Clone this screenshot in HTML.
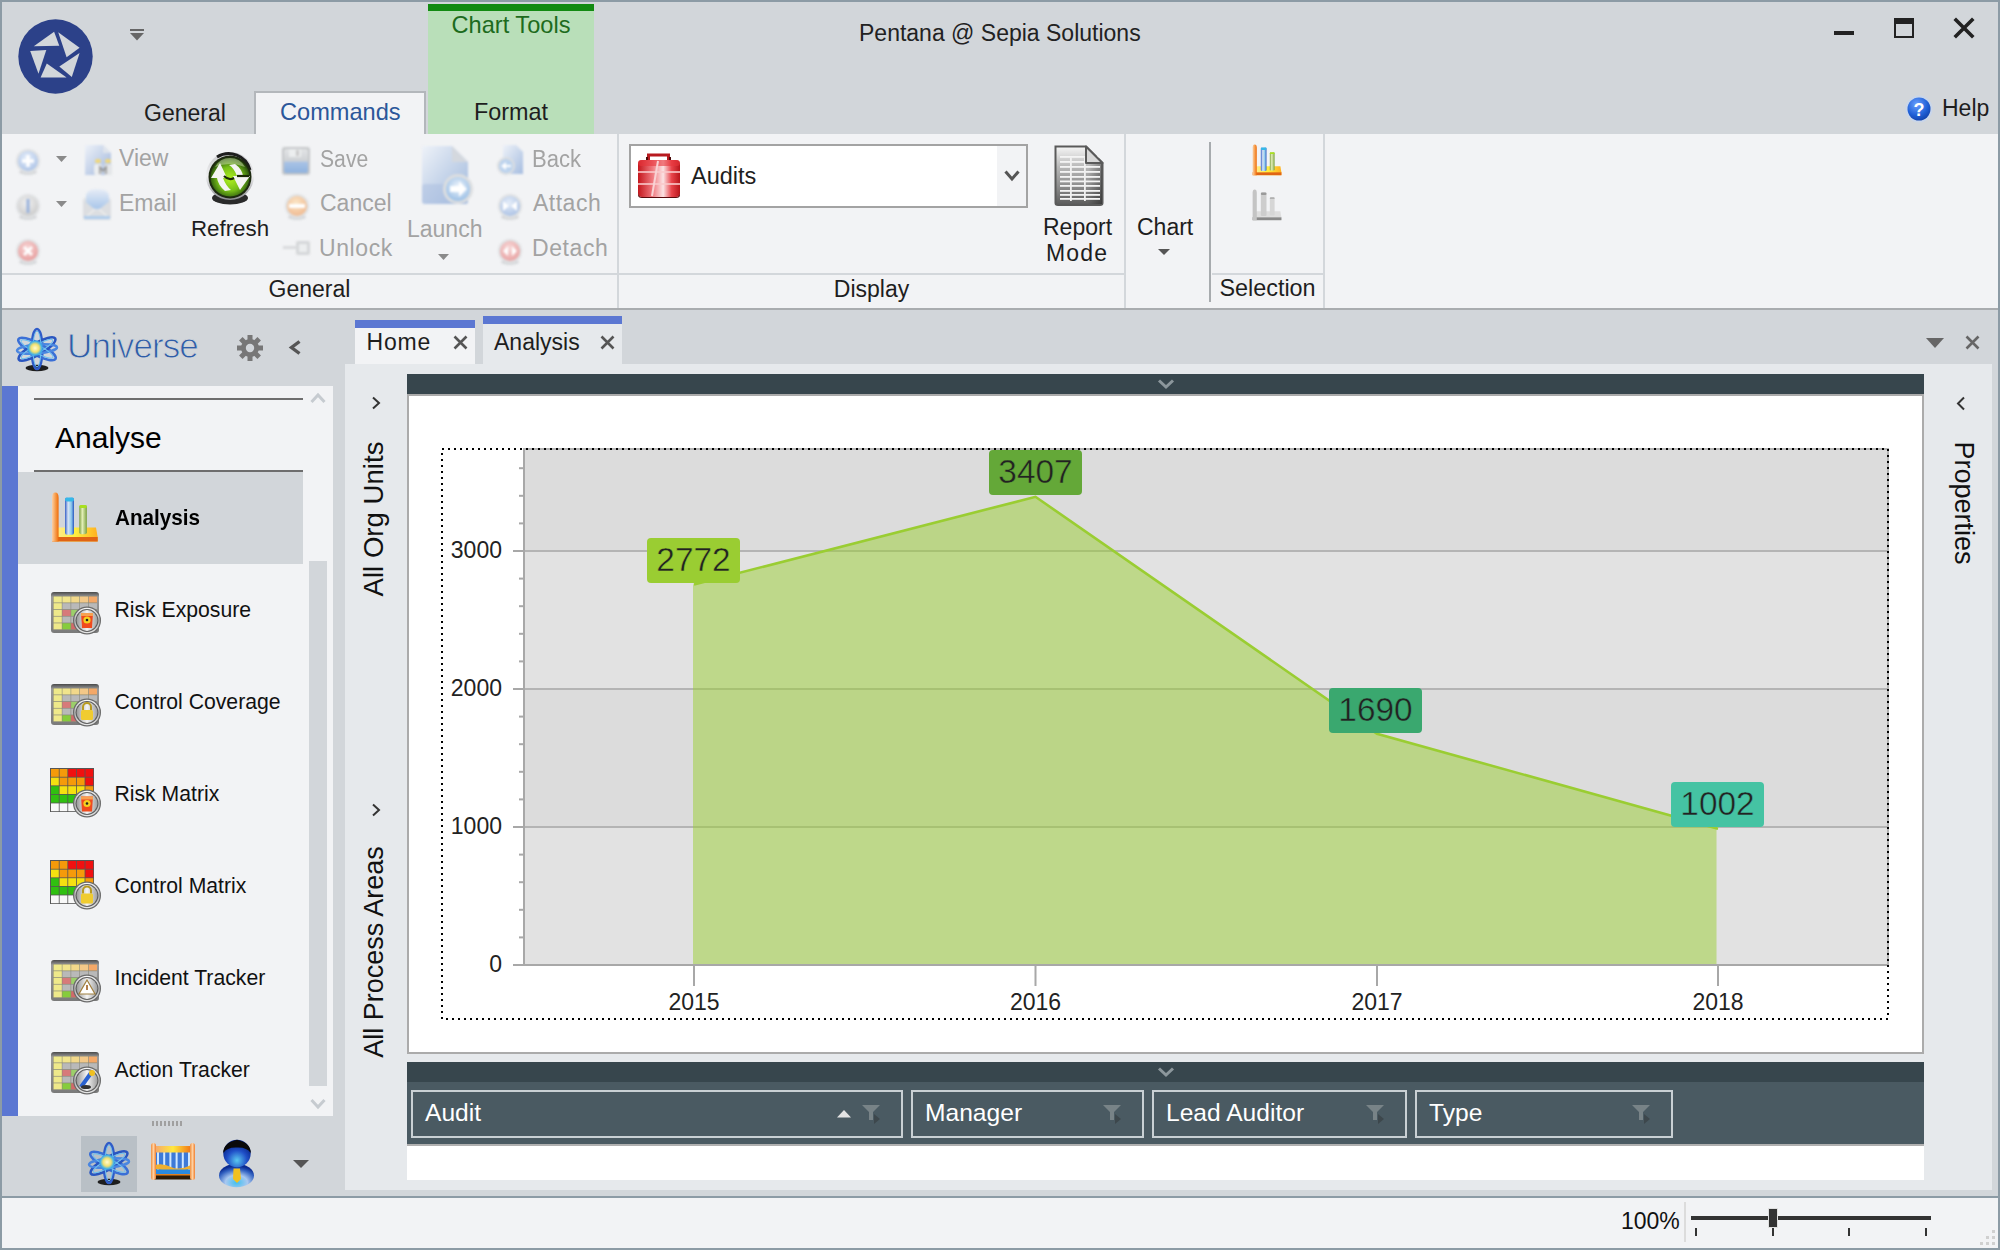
<!DOCTYPE html>
<html><head><meta charset="utf-8">
<style>
*{box-sizing:border-box;margin:0;padding:0}
html,body{width:2000px;height:1250px;overflow:hidden;background:#d2d6da;font-family:"Liberation Sans",sans-serif;color:#1e1e1e}
.a{position:absolute}
.t{position:absolute;white-space:nowrap;line-height:1}
svg{overflow:visible}
</style></head><body>
<div class="a" style="left:0px;top:0px;width:2000px;height:1250px;background:#d2d6da;"></div>
<svg class="a" style="left:18px;top:19px;" width="75" height="75" viewBox="0 0 75 75"><circle cx="37.5" cy="37.5" r="37.2" fill="#2c4189"/>
<g fill="#d2d6da">
<polygon points="15.8,27.3 36.1,12.7 41.3,26.8"/>
<polygon points="40.2,13.2 61.6,28.8 48.6,38.2"/>
<polygon points="61.6,34 53.8,58 41.3,47.6"/>
<polygon points="48.6,58.5 22.6,58.5 28.8,44.4"/>
<polygon points="20.5,54.8 12.2,32 28.3,30.9"/>
</g></svg>
<svg class="a" style="left:129px;top:28px;" width="16" height="14" viewBox="0 0 16 14"><rect x="1" y="1" width="14" height="2" fill="#666"/><path d="M1 5 H15 L8 12.5 Z" fill="#666"/></svg>
<div class="a" style="left:428px;top:4px;width:166px;height:130px;background:#b9dfb9;"></div>
<div class="a" style="left:428px;top:4px;width:166px;height:7px;background:#128a12;"></div>
<div class="t" style="left:428px;top:14.02px;font-size:23.6px;color:#1d6b1d;text-align:center;width:166px;">Chart Tools</div>
<div class="t" style="left:144px;top:101.53px;font-size:23px;color:#1e1e1e;">General</div>
<div class="a" style="left:254px;top:91px;width:172px;height:44px;background:#f2f3f5;border:2px solid #b3b7bb;border-bottom:none"></div>
<div class="t" style="left:280px;top:101.02px;font-size:23.6px;color:#2b579a;">Commands</div>
<div class="t" style="left:428px;top:101.19px;font-size:23.4px;color:#1e1e1e;text-align:center;width:166px;">Format</div>
<div class="t" style="left:859px;top:22.33px;font-size:23px;color:#222;">Pentana @ Sepia Solutions</div>
<div class="a" style="left:1834px;top:31px;width:20px;height:4px;background:#222;"></div>
<div class="a" style="left:1894px;top:18px;width:20px;height:20px;background:transparent;border:2px solid #222;border-top:6px solid #222"></div>
<svg class="a" style="left:1954px;top:18px;" width="20" height="20" viewBox="0 0 20 20"><path d="M2 2 L18 18 M18 2 L2 18" stroke="#222" stroke-width="3.6" stroke-linecap="square"/></svg>
<svg class="a" style="left:1905px;top:95px;" width="28" height="28" viewBox="0 0 28 28"><defs><radialGradient id="hg" cx="0.4" cy="0.3" r="0.8"><stop offset="0" stop-color="#6aa0ff"/><stop offset="0.6" stop-color="#1f5fd6"/><stop offset="1" stop-color="#0d3aa0"/></radialGradient></defs>
<circle cx="14" cy="14" r="13.5" fill="#c9d6ea"/><circle cx="14" cy="14" r="11.5" fill="url(#hg)"/>
<text x="14" y="21" font-family="Liberation Sans" font-weight="700" font-size="18" fill="#fff" text-anchor="middle">?</text></svg>
<div class="t" style="left:1942px;top:96.53px;font-size:23px;color:#1e1e1e;">Help</div>
<div class="a" style="left:2px;top:134px;width:1996px;height:174px;background:#f2f3f5;"></div>
<div class="a" style="left:2px;top:308px;width:1996px;height:2px;background:#a9acaf;"></div>
<div class="a" style="left:2px;top:273px;width:615px;height:2px;background:#d3d7db;"></div>
<div class="a" style="left:619px;top:273px;width:506px;height:2px;background:#d3d7db;"></div>
<div class="a" style="left:1212px;top:273px;width:111px;height:2px;background:#d3d7db;"></div>
<div class="a" style="left:617px;top:134px;width:2px;height:174px;background:#d3d7db;"></div>
<div class="a" style="left:1124px;top:134px;width:2px;height:174px;background:#d3d7db;"></div>
<div class="a" style="left:1323px;top:134px;width:2px;height:174px;background:#d3d7db;"></div>
<div class="a" style="left:1209px;top:142px;width:2px;height:160px;background:#a7abae;"></div>
<div class="t" style="left:2px;top:277.53px;font-size:23px;color:#1e1e1e;text-align:center;width:615px;">General</div>
<div class="t" style="left:619px;top:277.53px;font-size:23px;color:#1e1e1e;text-align:center;width:505px;">Display</div>
<div class="t" style="left:1212px;top:277.19px;font-size:23.4px;color:#1e1e1e;text-align:center;width:111px;">Selection</div>
<svg class="a" style="left:15px;top:146px;filter:blur(0.9px)" width="26" height="30" viewBox="0 0 26 30"><defs><radialGradient id="fc15146" cx="0.45" cy="0.35" r="0.7"><stop offset="0" stop-color="#e8f0fb"/><stop offset="1" stop-color="#a9c1e6"/></radialGradient></defs>
<ellipse cx="13" cy="26" rx="9" ry="3" fill="#d6d8da"/>
<circle cx="13" cy="15" r="12" fill="#dfe1e3"/><circle cx="13" cy="15" r="10" fill="url(#fc15146)"/><path d="M13 9 V21 M7 15 H19" stroke="#fff" stroke-width="3.5"/></svg>
<svg class="a" style="left:56px;top:156px;" width="11" height="6" viewBox="0 0 11 6"><path d="M0 0 H11 L5.5 6 Z" fill="#8a8a8a"/></svg>
<svg class="a" style="left:15px;top:191px;filter:blur(0.9px)" width="26" height="30" viewBox="0 0 26 30"><defs><radialGradient id="fc15191" cx="0.45" cy="0.35" r="0.7"><stop offset="0" stop-color="#f2f2f2"/><stop offset="1" stop-color="#c9c9c9"/></radialGradient></defs>
<ellipse cx="13" cy="26" rx="9" ry="3" fill="#d6d8da"/>
<circle cx="13" cy="15" r="12" fill="#dfe1e3"/><circle cx="13" cy="15" r="10" fill="url(#fc15191)"/><path d="M13 8 V22" stroke="#9ab3dc" stroke-width="3"/></svg>
<svg class="a" style="left:56px;top:201px;" width="11" height="6" viewBox="0 0 11 6"><path d="M0 0 H11 L5.5 6 Z" fill="#8a8a8a"/></svg>
<svg class="a" style="left:15px;top:236px;filter:blur(0.9px)" width="26" height="30" viewBox="0 0 26 30"><defs><radialGradient id="fc15236" cx="0.45" cy="0.35" r="0.7"><stop offset="0" stop-color="#f7d7d7"/><stop offset="1" stop-color="#e79a9a"/></radialGradient></defs>
<ellipse cx="13" cy="26" rx="9" ry="3" fill="#d6d8da"/>
<circle cx="13" cy="15" r="12" fill="#dfe1e3"/><circle cx="13" cy="15" r="10" fill="url(#fc15236)"/><path d="M9 11 L17 19 M17 11 L9 19" stroke="#fff" stroke-width="3"/></svg>
<svg class="a" style="left:84px;top:144px;filter:blur(0.9px)" width="30" height="32" viewBox="0 0 30 32"><defs><linearGradient id="vg" x1="0" y1="0" x2="1" y2="1"><stop offset="0" stop-color="#eef2f8"/><stop offset="1" stop-color="#9fb6dc"/></linearGradient></defs>
<path d="M1 1 H19 L27 9 V31 H1 Z" fill="url(#vg)"/><path d="M19 1 V9 H27" fill="#dfe4ec"/>
<rect x="10" y="20" width="8" height="11" rx="2" fill="#eceeef"/><rect x="20" y="20" width="8" height="11" rx="2" fill="#e4e6e8"/><path d="M16 30 V23 L19 27 L22 23 V30" stroke="#8a8a8a" stroke-width="1.4" fill="none"/>
<ellipse cx="14" cy="17" rx="3" ry="2" fill="#f2d878"/><ellipse cx="24" cy="17" rx="3" ry="2" fill="#f2d878"/></svg>
<div class="t" style="left:119px;top:147.23px;font-size:23px;color:#a3a3a3;">View</div>
<svg class="a" style="left:82px;top:189px;filter:blur(0.9px)" width="31" height="32" viewBox="0 0 31 32"><defs><linearGradient id="eg" x1="0" y1="0" x2="0" y2="1"><stop offset="0" stop-color="#e6ecf6"/><stop offset="1" stop-color="#a8c6ea"/></linearGradient></defs>
<path d="M1 10 L15 2 L29 10 V31 H1 Z" fill="#e2e4e6"/>
<path d="M4 20 V8 Q4 0 15 0 Q27 0 27 8 V20 Z" fill="url(#eg)"/>
<path d="M1 11 L15 22 L29 11 V31 H1 Z" fill="#dcdee1"/><path d="M1 31 L13 20 M29 31 L17 20" stroke="#eeeeee" stroke-width="1.5"/>
<rect x="2" y="27" width="26" height="3" fill="#b0cdec"/></svg>
<div class="t" style="left:119px;top:192.23px;font-size:23px;color:#a3a3a3;">Email</div>
<svg class="a" style="left:203px;top:145px;filter:blur(0.7px)" width="52" height="62" viewBox="0 0 52 62"><defs><radialGradient id="rg" cx="0.5" cy="0.55" r="0.55"><stop offset="0" stop-color="#b0f020"/><stop offset="0.55" stop-color="#78c018"/><stop offset="0.85" stop-color="#3d7010"/><stop offset="1" stop-color="#1e3a08"/></radialGradient>
<linearGradient id="rr" x1="0" y1="0" x2="0" y2="1"><stop offset="0" stop-color="#c8c8cc"/><stop offset="0.5" stop-color="#f0f0f2"/><stop offset="1" stop-color="#8a8a90"/></linearGradient></defs>
<g>
<ellipse cx="27" cy="53" rx="18" ry="6.5" fill="#2a2a2a"/>
<circle cx="27" cy="31" r="24" fill="url(#rr)"/>
<path d="M14 12 A22 22 0 0 1 47 25" stroke="#1e1e1e" stroke-width="3" fill="none"/>
<circle cx="27" cy="32" r="21.5" fill="#1e2a10"/>
<circle cx="27" cy="32" r="19.5" fill="url(#rg)"/>
<path d="M12 22 A17 17 0 0 1 42 22 Q27 16 12 22 Z" fill="#e0f0c0" opacity="0.45"/>
<path d="M8 33 L17 18 L24 33 L20 33 Q23 41 28 45 L22 46 Q15 40 14 33 Z" fill="#f4f4f2"/>
<path d="M47 31 L37 45 L30 31 L34 31 Q31 23 26 20 L32 19 Q39 24 40 31 Z" fill="#f4f4f2"/>
<path d="M21 31 Q26 36 31 33" stroke="#1a2a05" stroke-width="2.2" fill="none"/>
<path d="M34 31 L46 31" stroke="#1a2a05" stroke-width="2.2"/>
</g></svg>
<div class="t" style="left:191px;top:217.82px;font-size:22.3px;color:#1e1e1e;">Refresh</div>
<svg class="a" style="left:281px;top:146px;filter:blur(0.9px)" width="30" height="30" viewBox="0 0 30 30"><defs><linearGradient id="sg" x1="0" y1="0" x2="0" y2="1"><stop offset="0" stop-color="#e2e4e6"/><stop offset="0.5" stop-color="#cfd2d5"/><stop offset="0.55" stop-color="#a9c3e6"/><stop offset="1" stop-color="#8fb2de"/></linearGradient></defs>
<rect x="1" y="1" width="28" height="28" rx="3" fill="#c5c7c9"/><rect x="3" y="3" width="24" height="24" rx="2" fill="url(#sg)"/><rect x="8" y="3" width="12" height="8" fill="#eceeef"/><rect x="15" y="4" width="3" height="6" fill="#c9c9c9"/></svg>
<div class="t" style="left:320px;top:147.53px;font-size:23px;color:#a3a3a3;transform:scaleX(0.92);transform-origin:0 0">Save</div>
<svg class="a" style="left:284px;top:191px;filter:blur(0.9px)" width="26" height="30" viewBox="0 0 26 30"><defs><radialGradient id="fc284191" cx="0.45" cy="0.35" r="0.7"><stop offset="0" stop-color="#fbe7c8"/><stop offset="1" stop-color="#f0b78d"/></radialGradient></defs>
<ellipse cx="13" cy="26" rx="9" ry="3" fill="#d6d8da"/>
<circle cx="13" cy="15" r="12" fill="#dfe1e3"/><circle cx="13" cy="15" r="10" fill="url(#fc284191)"/><rect x="5" y="13" width="16" height="4" fill="#fff"/></svg>
<div class="t" style="left:320px;top:192.23px;font-size:23px;color:#a3a3a3;">Cancel</div>
<svg class="a" style="left:282px;top:240px;filter:blur(0.9px)" width="30" height="16" viewBox="0 0 30 16"><rect x="14" y="1" width="14" height="14" rx="2" fill="#d5d7d9"/><rect x="17" y="4" width="8" height="8" fill="#eceeef"/><rect x="1" y="6" width="14" height="3" fill="#d9dbdd"/></svg>
<div class="t" style="left:319px;top:237.03px;font-size:23px;color:#a3a3a3;letter-spacing:0.6px">Unlock</div>
<svg class="a" style="left:418px;top:144px;filter:blur(0.9px)" width="56" height="64" viewBox="0 0 56 64"><defs><linearGradient id="lg" x1="0" y1="0" x2="1" y2="1"><stop offset="0" stop-color="#eef2f8"/><stop offset="1" stop-color="#9fb8dc"/></linearGradient>
<radialGradient id="lc" cx="0.5" cy="0.4" r="0.6"><stop offset="0" stop-color="#eef4fb"/><stop offset="1" stop-color="#9cc0e6"/></radialGradient></defs>
<path d="M7 2 H34 L50 18 V57 Q50 60 47 60 H7 Q4 60 4 57 V5 Q4 2 7 2 Z" fill="url(#lg)"/><path d="M34 2 V18 H50 Z" fill="#d4d8de"/><rect x="4" y="40" width="46" height="20" rx="3" fill="#a9bde0" opacity="0.5"/>
<circle cx="40" cy="45" r="15" fill="#dcdee0"/><circle cx="40" cy="45" r="12" fill="url(#lc)"/><path d="M32 42 H41 V37 L49 45 L41 53 V48 H32 Z" fill="#fff"/></svg>
<div class="t" style="left:407px;top:217.53px;font-size:23px;color:#a3a3a3;">Launch</div>
<svg class="a" style="left:438px;top:254px;" width="11" height="6" viewBox="0 0 11 6"><path d="M0 0 H11 L5.5 6 Z" fill="#8a8a8a"/></svg>
<svg class="a" style="left:496px;top:144px;filter:blur(0.9px)" width="30" height="32" viewBox="0 0 30 32"><defs><linearGradient id="bg1" x1="0" y1="0" x2="1" y2="1"><stop offset="0" stop-color="#eef2f8"/><stop offset="1" stop-color="#a6bde0"/></linearGradient></defs>
<path d="M7 1 H20 L27 8 V30 H7 Z" fill="url(#bg1)"/><circle cx="10" cy="22" r="9" fill="#dcdee0"/><circle cx="10" cy="22" r="7" fill="#bcd3ee"/><path d="M5 22 L10 18 V26 Z M9 21 H15 V23 H9 Z" fill="#fff"/></svg>
<div class="t" style="left:532px;top:147.53px;font-size:23px;color:#a3a3a3;transform:scaleX(0.96);transform-origin:0 0">Back</div>
<svg class="a" style="left:497px;top:191px;filter:blur(0.9px)" width="26" height="30" viewBox="0 0 26 30"><defs><radialGradient id="fc497191" cx="0.45" cy="0.35" r="0.7"><stop offset="0" stop-color="#e6eef9"/><stop offset="1" stop-color="#a9c0e4"/></radialGradient></defs>
<ellipse cx="13" cy="26" rx="9" ry="3" fill="#d6d8da"/>
<circle cx="13" cy="15" r="12" fill="#dfe1e3"/><circle cx="13" cy="15" r="10" fill="url(#fc497191)"/><path d="M6 10 L12 15 L6 20 Z M20 10 L14 15 L20 20 Z" fill="#fff"/></svg>
<div class="t" style="left:533px;top:192.23px;font-size:23px;color:#a3a3a3;letter-spacing:0.5px">Attach</div>
<svg class="a" style="left:497px;top:236px;filter:blur(0.9px)" width="26" height="30" viewBox="0 0 26 30"><defs><radialGradient id="fc497236" cx="0.45" cy="0.35" r="0.7"><stop offset="0" stop-color="#f7d9d9"/><stop offset="1" stop-color="#e8a0a0"/></radialGradient></defs>
<ellipse cx="13" cy="26" rx="9" ry="3" fill="#d6d8da"/>
<circle cx="13" cy="15" r="12" fill="#dfe1e3"/><circle cx="13" cy="15" r="10" fill="url(#fc497236)"/><path d="M11 10 L6 15 L11 20 Z M15 10 L20 15 L15 20 Z" fill="#fff"/></svg>
<div class="t" style="left:532px;top:237.03px;font-size:23px;color:#a3a3a3;letter-spacing:0.6px">Detach</div>
<div class="a" style="left:629px;top:144px;width:399px;height:64px;background:#fff;border:2px solid #a3a3a3"></div>
<div class="a" style="left:997px;top:146px;width:29px;height:60px;background:#f2f3f5;"></div>
<svg class="a" style="left:1004px;top:170px;" width="16" height="12" viewBox="0 0 16 12"><path d="M1.5 1.5 L8 9 L14.5 1.5" stroke="#555" stroke-width="3" fill="none"/></svg>
<svg class="a" style="left:636px;top:152px;" width="46" height="46" viewBox="0 0 46 46"><defs><linearGradient id="bc" x1="0" y1="0" x2="1" y2="0"><stop offset="0" stop-color="#c4161c"/><stop offset="0.35" stop-color="#f07a80"/><stop offset="0.6" stop-color="#fbe3e4"/><stop offset="0.8" stop-color="#e8444b"/><stop offset="1" stop-color="#b9151b"/></linearGradient></defs>
<path d="M12.5 9 V3 H32.5 V9" stroke="#b81a1f" stroke-width="3" fill="none"/><path d="M11 9 V5 M34 9 V5" stroke="#4a0a0a" stroke-width="2"/>
<rect x="2" y="8" width="42" height="37" rx="4" fill="url(#bc)"/><rect x="2" y="8" width="42" height="6" rx="3" fill="#e8363c" opacity="0.6"/>
<rect x="2" y="19" width="42" height="2" fill="#f9c9cb" opacity="0.8"/><rect x="2" y="31" width="42" height="2" fill="#f9c9cb" opacity="0.8"/>
<path d="M16 44 L22 9" stroke="#f9d2d4" stroke-width="2"/><path d="M2 40 Q2 45 6 45 H40 Q44 45 44 40 V43 Q44 46 40 46 H6 Q2 46 2 43 Z" fill="#5a0a0c"/></svg>
<div class="t" style="left:691px;top:164.81px;font-size:23.5px;color:#1e1e1e;">Audits</div>
<svg class="a" style="left:1053px;top:145px;filter:blur(0.5px)" width="52" height="62" viewBox="0 0 52 62"><defs><linearGradient id="rm" x1="0" y1="0" x2="0" y2="1"><stop offset="0" stop-color="#f6f6f6"/><stop offset="0.35" stop-color="#b8b8b8"/><stop offset="0.7" stop-color="#8a8a8a"/><stop offset="1" stop-color="#5a5a5a"/></linearGradient>
<linearGradient id="rm2" x1="0" y1="0" x2="1" y2="0"><stop offset="0" stop-color="#000" stop-opacity="0"/><stop offset="0.7" stop-color="#000" stop-opacity="0"/><stop offset="1" stop-color="#000" stop-opacity="0.35"/></linearGradient></defs>
<path d="M2.5 1.5 H33 L49.5 18 V58 Q49.5 60 47 60 H5 Q2.5 60 2.5 58 Z" fill="url(#rm)" stroke="#5a5a5a" stroke-width="2"/>
<path d="M3 2 H33 L49 18 V59 H3 Z" fill="url(#rm2)"/><rect x="7" y="11.0" width="40" height="1.8" fill="#f4f4f4"/><rect x="7" y="16.0" width="40" height="1.8" fill="#f4f4f4"/><rect x="7" y="21.0" width="40" height="1.8" fill="#f4f4f4"/><rect x="7" y="26.0" width="40" height="1.8" fill="#f4f4f4"/><rect x="7" y="31.0" width="40" height="1.8" fill="#f4f4f4"/><rect x="7" y="35.5" width="40" height="1.8" fill="#f4f4f4"/><rect x="7" y="40.0" width="40" height="1.8" fill="#f4f4f4"/><rect x="7" y="45.0" width="40" height="1.8" fill="#f4f4f4"/><rect x="7" y="49.0" width="40" height="1.8" fill="#f4f4f4"/><rect x="7" y="53.0" width="40" height="1.8" fill="#f4f4f4"/><rect x="17" y="12" width="1.8" height="44" fill="#f0f0f0"/><rect x="31" y="12" width="1.8" height="44" fill="#f0f0f0"/>
<path d="M33 1.5 V18 H49.5 Z" fill="#d8d8d8" stroke="#5a5a5a" stroke-width="2" stroke-linejoin="round"/></svg>
<div class="t" style="left:1043px;top:216.23px;font-size:23px;color:#1e1e1e;">Report</div>
<div class="t" style="left:1046px;top:241.93px;font-size:23px;color:#1e1e1e;letter-spacing:1.2px">Mode</div>
<div class="t" style="left:1137px;top:216.23px;font-size:23px;color:#1e1e1e;">Chart</div>
<svg class="a" style="left:1158px;top:249px;" width="12" height="6" viewBox="0 0 12 6"><path d="M0 0 H12 L6.0 6 Z" fill="#555"/></svg>
<svg class="a" style="left:1252px;top:144px;transform:scale(0.63);transform-origin:0 0;filter:blur(0.4px)" width="48" height="50" viewBox="0 0 48 50"><defs><linearGradient id="bos1" x1="0" y1="0" x2="1" y2="0"><stop offset="0" stop-color="#f9d0a8"/><stop offset="0.5" stop-color="#f7a050"/><stop offset="1" stop-color="#ee6a08"/></linearGradient>
<linearGradient id="bbs1" x1="0" y1="0" x2="1" y2="0"><stop offset="0" stop-color="#3560c8"/><stop offset="0.35" stop-color="#d8e4f4"/><stop offset="0.7" stop-color="#8cc8ec"/><stop offset="1" stop-color="#2a58c0"/></linearGradient>
<linearGradient id="bgs1" x1="0" y1="0" x2="1" y2="0"><stop offset="0" stop-color="#7ea040"/><stop offset="0.4" stop-color="#e4f0b8"/><stop offset="1" stop-color="#7aa040"/></linearGradient>
<linearGradient id="bys1" x1="0" y1="0" x2="1" y2="0"><stop offset="0" stop-color="#ffe8a0"/><stop offset="0.5" stop-color="#fff040"/><stop offset="1" stop-color="#ffb020"/></linearGradient></defs><path d="M7 35.4 H45 L46.7 45 V49.5 H1 V45 Z" fill="url(#bys1)"/><rect x="1" y="45" width="45.7" height="4.5" fill="#e06414"/><path d="M1 49.5 V6 Q1 0.6 4.3 0.6 Q7.6 0.6 7.6 6 V49.5 Z" fill="url(#bos1)"/>
<rect x="14" y="5.4" width="9" height="37.3" rx="2" fill="url(#bbs1)"/><rect x="14" y="5.4" width="9" height="4" rx="2" fill="#36b8e8"/>
<rect x="28.3" y="13" width="7.6" height="29.2" rx="2" fill="url(#bgs1)"/><rect x="28.3" y="13" width="7.6" height="3" rx="1.5" fill="#a8e020"/></svg>
<svg class="a" style="left:1252px;top:189px;transform:scale(0.63);transform-origin:0 0;filter:blur(0.4px)" width="48" height="50" viewBox="0 0 48 50"><path d="M7 35.4 H45 L46.7 45 V49.5 H1 V45 Z" fill="#dedede"/><rect x="1" y="45" width="45.7" height="4.5" fill="#8a8a8a"/><path d="M1 49.5 V6 Q1 0.6 4.3 0.6 Q7.6 0.6 7.6 6 V49.5 Z" fill="#c4c4c4"/>
<rect x="14" y="5.4" width="9" height="37.3" rx="2" fill="#cdcdcd"/><rect x="14" y="5.4" width="9" height="4" rx="2" fill="#9a9a9a"/>
<rect x="28.3" y="13" width="7.6" height="29.2" rx="2" fill="#d6d6d6"/><rect x="28.3" y="13" width="7.6" height="3" rx="1.5" fill="#b0b0b0"/></svg>
<svg class="a" style="left:15px;top:327px;transform:scale(1.0);transform-origin:0 0;filter:blur(0.5px)" width="44" height="44" viewBox="0 0 44 44"><defs><radialGradient id="ag" cx="0.45" cy="0.45" r="0.5"><stop offset="0" stop-color="#fffbd0"/><stop offset="0.45" stop-color="#f0e070"/><stop offset="0.75" stop-color="#40b0e8"/><stop offset="1" stop-color="#3a90e0" stop-opacity="0"/></radialGradient></defs><ellipse cx="22" cy="41" rx="11.5" ry="3.2" fill="#1e1e1e"/><g fill="none" stroke-width="2.6"><ellipse cx="22" cy="22" rx="20" ry="5.5" stroke="#2f5cc8" transform="rotate(90 22 22)"/><ellipse cx="22" cy="22" rx="21" ry="6" stroke="#3a6fd6" transform="rotate(28 22 22)"/><ellipse cx="22" cy="22" rx="21" ry="6" stroke="#2a56c0" transform="rotate(150 22 22)"/><ellipse cx="22" cy="22" rx="20" ry="4.5" stroke="#4a86e0" transform="rotate(-5 22 22)"/></g><g fill="none" stroke="#6cc0f0" stroke-width="1"><ellipse cx="22" cy="22" rx="18" ry="4" transform="rotate(90 22 22)"/><ellipse cx="22" cy="22" rx="18" ry="4" transform="rotate(28 22 22)"/><ellipse cx="22" cy="22" rx="18" ry="4" transform="rotate(150 22 22)"/></g><circle cx="21" cy="22" r="9" fill="url(#ag)"/></svg>
<div class="t" style="left:67px;top:328.37px;font-size:35px;color:#2f5da8;letter-spacing:-0.9px;-webkit-text-stroke:0.9px #d2d6da">Universe</div>
<svg class="a" style="left:237px;top:335px;" width="26" height="26" viewBox="0 0 26 26"><g fill="#777"><circle cx="13" cy="13" r="9"/><rect x="10.5" y="0" width="5" height="6" transform="rotate(0 13 13)"/><rect x="10.5" y="0" width="5" height="6" transform="rotate(45 13 13)"/><rect x="10.5" y="0" width="5" height="6" transform="rotate(90 13 13)"/><rect x="10.5" y="0" width="5" height="6" transform="rotate(135 13 13)"/><rect x="10.5" y="0" width="5" height="6" transform="rotate(180 13 13)"/><rect x="10.5" y="0" width="5" height="6" transform="rotate(225 13 13)"/><rect x="10.5" y="0" width="5" height="6" transform="rotate(270 13 13)"/><rect x="10.5" y="0" width="5" height="6" transform="rotate(315 13 13)"/></g><circle cx="13" cy="13" r="4.2" fill="#d2d6da"/></svg>
<svg class="a" style="left:289px;top:340px;" width="13" height="15" viewBox="0 0 13 15"><path d="M10.5 1.5 L2.5 7.5 L10.5 13.5" stroke="#555" stroke-width="3.4" fill="none"/></svg>
<div class="a" style="left:2px;top:386px;width:331px;height:730px;background:#f2f3f5;"></div>
<div class="a" style="left:2px;top:386px;width:16px;height:730px;background:#5b77d2;"></div>
<div class="a" style="left:34px;top:398px;width:269px;height:2px;background:#6e6e6e;"></div>
<div class="t" style="left:55px;top:422.61px;font-size:30px;color:#000;">Analyse</div>
<div class="a" style="left:34px;top:470px;width:269px;height:2px;background:#6e6e6e;"></div>
<div class="a" style="left:18px;top:472px;width:285px;height:92px;background:#d2d6da;"></div>
<svg class="a" style="left:310px;top:392px;" width="16" height="12" viewBox="0 0 16 12"><path d="M1.5 10 L8 3 L14.5 10" stroke="#c6cbd0" stroke-width="3" fill="none"/></svg>
<svg class="a" style="left:310px;top:1098px;" width="16" height="12" viewBox="0 0 16 12"><path d="M1.5 2 L8 9 L14.5 2" stroke="#c6cbd0" stroke-width="3" fill="none"/></svg>
<div class="a" style="left:309px;top:561px;width:18px;height:525px;background:#d2d6da;"></div>
<svg class="a" style="left:51px;top:492px;transform:scale(1.0);transform-origin:0 0;filter:blur(0.4px)" width="48" height="50" viewBox="0 0 48 50"><defs><linearGradient id="bon1" x1="0" y1="0" x2="1" y2="0"><stop offset="0" stop-color="#f9d0a8"/><stop offset="0.5" stop-color="#f7a050"/><stop offset="1" stop-color="#ee6a08"/></linearGradient>
<linearGradient id="bbn1" x1="0" y1="0" x2="1" y2="0"><stop offset="0" stop-color="#3560c8"/><stop offset="0.35" stop-color="#d8e4f4"/><stop offset="0.7" stop-color="#8cc8ec"/><stop offset="1" stop-color="#2a58c0"/></linearGradient>
<linearGradient id="bgn1" x1="0" y1="0" x2="1" y2="0"><stop offset="0" stop-color="#7ea040"/><stop offset="0.4" stop-color="#e4f0b8"/><stop offset="1" stop-color="#7aa040"/></linearGradient>
<linearGradient id="byn1" x1="0" y1="0" x2="1" y2="0"><stop offset="0" stop-color="#ffe8a0"/><stop offset="0.5" stop-color="#fff040"/><stop offset="1" stop-color="#ffb020"/></linearGradient></defs><path d="M7 35.4 H45 L46.7 45 V49.5 H1 V45 Z" fill="url(#byn1)"/><rect x="1" y="45" width="45.7" height="4.5" fill="#e06414"/><path d="M1 49.5 V6 Q1 0.6 4.3 0.6 Q7.6 0.6 7.6 6 V49.5 Z" fill="url(#bon1)"/>
<rect x="14" y="5.4" width="9" height="37.3" rx="2" fill="url(#bbn1)"/><rect x="14" y="5.4" width="9" height="4" rx="2" fill="#36b8e8"/>
<rect x="28.3" y="13" width="7.6" height="29.2" rx="2" fill="url(#bgn1)"/><rect x="28.3" y="13" width="7.6" height="3" rx="1.5" fill="#a8e020"/></svg>
<div class="t" style="left:114.5px;top:506.58px;font-size:22px;color:#000;font-weight:700;transform:scaleX(0.94);transform-origin:0 0">Analysis</div>
<svg class="a" style="left:51px;top:591px;" width="50" height="46" viewBox="0 0 50 46"><defs><linearGradient id="silv" x1="0" y1="0" x2="0" y2="1"><stop offset="0" stop-color="#fafafa"/><stop offset="0.5" stop-color="#b0b0b0"/><stop offset="1" stop-color="#e8e8e8"/></linearGradient><linearGradient id="silv2" x1="0" y1="0" x2="1" y2="0"><stop offset="0" stop-color="#9a9a9a"/><stop offset="0.5" stop-color="#f4f4f4"/><stop offset="1" stop-color="#a0a0a0"/></linearGradient><linearGradient id="tfr" x1="0" y1="0" x2="0" y2="1"><stop offset="0" stop-color="#4a4a4a"/><stop offset="0.12" stop-color="#9a9a9a"/><stop offset="1" stop-color="#7a7a7a"/></linearGradient></defs><rect x="0" y="1" width="48" height="41" rx="3" fill="url(#tfr)"/><rect x="2" y="5" width="44" height="34" fill="#8a8a7a"/><rect x="2.6" y="5.5" width="8.2" height="6.0" fill="#efe98a"/><rect x="11.4" y="5.5" width="8.2" height="6.0" fill="#f1e48c"/><rect x="20.2" y="5.5" width="8.2" height="6.0" fill="#f2d88a"/><rect x="29.0" y="5.5" width="8.2" height="6.0" fill="#f3c888"/><rect x="37.8" y="5.5" width="8.2" height="6.0" fill="#f4a868"/><rect x="2.6" y="12.2" width="8.2" height="6.0" fill="#efe98a"/><rect x="11.4" y="12.2" width="8.2" height="6.0" fill="#b9b9b9"/><rect x="20.2" y="12.2" width="8.2" height="6.0" fill="#b9b9b9"/><rect x="29.0" y="12.2" width="8.2" height="6.0" fill="#b9b9b9"/><rect x="37.8" y="12.2" width="8.2" height="6.0" fill="#b9b9b9"/><rect x="2.6" y="18.9" width="8.2" height="6.0" fill="#efe98a"/><rect x="11.4" y="18.9" width="8.2" height="6.0" fill="#d77a7a"/><rect x="20.2" y="18.9" width="8.2" height="6.0" fill="#9ccf6a"/><rect x="29.0" y="18.9" width="8.2" height="6.0" fill="#b9b9b9"/><rect x="37.8" y="18.9" width="8.2" height="6.0" fill="#b9b9b9"/><rect x="2.6" y="25.6" width="8.2" height="6.0" fill="#efe98a"/><rect x="11.4" y="25.6" width="8.2" height="6.0" fill="#b9b9b9"/><rect x="20.2" y="25.6" width="8.2" height="6.0" fill="#b9b9b9"/><rect x="29.0" y="25.6" width="8.2" height="6.0" fill="#b9b9b9"/><rect x="37.8" y="25.6" width="8.2" height="6.0" fill="#b9b9b9"/><rect x="2.6" y="32.3" width="8.2" height="6.0" fill="#efe98a"/><rect x="11.4" y="32.3" width="8.2" height="6.0" fill="#86cc3c"/><rect x="20.2" y="32.3" width="8.2" height="6.0" fill="#d06a6a"/><rect x="29.0" y="32.3" width="8.2" height="6.0" fill="#b9b9b9"/><rect x="37.8" y="32.3" width="8.2" height="6.0" fill="#b9b9b9"/><circle cx="36" cy="29.5" r="14" fill="#6a6a6a"/><circle cx="36" cy="29.5" r="12.8" fill="url(#silv)"/><circle cx="36" cy="29.5" r="11.4" fill="#5e5e5e"/><circle cx="36" cy="29.5" r="10.4" fill="url(#silv2)"/><path d="M30 22 H42 L41 37 H31 Z" fill="#f04a1e"/><rect x="30" y="22" width="12" height="3" fill="#f7a050"/><circle cx="36" cy="29" r="3.6" fill="#f5d020"/><circle cx="36" cy="29" r="1.3" fill="#222"/></svg>
<div class="t" style="left:114.5px;top:599.05px;font-size:21.2px;color:#111;">Risk Exposure</div>
<svg class="a" style="left:51px;top:683px;" width="50" height="46" viewBox="0 0 50 46"><defs><linearGradient id="silv" x1="0" y1="0" x2="0" y2="1"><stop offset="0" stop-color="#fafafa"/><stop offset="0.5" stop-color="#b0b0b0"/><stop offset="1" stop-color="#e8e8e8"/></linearGradient><linearGradient id="silv2" x1="0" y1="0" x2="1" y2="0"><stop offset="0" stop-color="#9a9a9a"/><stop offset="0.5" stop-color="#f4f4f4"/><stop offset="1" stop-color="#a0a0a0"/></linearGradient><linearGradient id="tfr" x1="0" y1="0" x2="0" y2="1"><stop offset="0" stop-color="#4a4a4a"/><stop offset="0.12" stop-color="#9a9a9a"/><stop offset="1" stop-color="#7a7a7a"/></linearGradient></defs><rect x="0" y="1" width="48" height="41" rx="3" fill="url(#tfr)"/><rect x="2" y="5" width="44" height="34" fill="#8a8a7a"/><rect x="2.6" y="5.5" width="8.2" height="6.0" fill="#efe98a"/><rect x="11.4" y="5.5" width="8.2" height="6.0" fill="#f1e48c"/><rect x="20.2" y="5.5" width="8.2" height="6.0" fill="#f2d88a"/><rect x="29.0" y="5.5" width="8.2" height="6.0" fill="#f3c888"/><rect x="37.8" y="5.5" width="8.2" height="6.0" fill="#f4a868"/><rect x="2.6" y="12.2" width="8.2" height="6.0" fill="#efe98a"/><rect x="11.4" y="12.2" width="8.2" height="6.0" fill="#b9b9b9"/><rect x="20.2" y="12.2" width="8.2" height="6.0" fill="#b9b9b9"/><rect x="29.0" y="12.2" width="8.2" height="6.0" fill="#b9b9b9"/><rect x="37.8" y="12.2" width="8.2" height="6.0" fill="#b9b9b9"/><rect x="2.6" y="18.9" width="8.2" height="6.0" fill="#efe98a"/><rect x="11.4" y="18.9" width="8.2" height="6.0" fill="#d77a7a"/><rect x="20.2" y="18.9" width="8.2" height="6.0" fill="#9ccf6a"/><rect x="29.0" y="18.9" width="8.2" height="6.0" fill="#b9b9b9"/><rect x="37.8" y="18.9" width="8.2" height="6.0" fill="#b9b9b9"/><rect x="2.6" y="25.6" width="8.2" height="6.0" fill="#efe98a"/><rect x="11.4" y="25.6" width="8.2" height="6.0" fill="#b9b9b9"/><rect x="20.2" y="25.6" width="8.2" height="6.0" fill="#b9b9b9"/><rect x="29.0" y="25.6" width="8.2" height="6.0" fill="#b9b9b9"/><rect x="37.8" y="25.6" width="8.2" height="6.0" fill="#b9b9b9"/><rect x="2.6" y="32.3" width="8.2" height="6.0" fill="#efe98a"/><rect x="11.4" y="32.3" width="8.2" height="6.0" fill="#86cc3c"/><rect x="20.2" y="32.3" width="8.2" height="6.0" fill="#d06a6a"/><rect x="29.0" y="32.3" width="8.2" height="6.0" fill="#b9b9b9"/><rect x="37.8" y="32.3" width="8.2" height="6.0" fill="#b9b9b9"/><circle cx="36" cy="29.5" r="14" fill="#6a6a6a"/><circle cx="36" cy="29.5" r="12.8" fill="url(#silv)"/><circle cx="36" cy="29.5" r="11.4" fill="#5e5e5e"/><circle cx="36" cy="29.5" r="10.4" fill="url(#silv2)"/><path d="M32 27 V24 A4 4 0 0 1 40 24 V27" stroke="#b89a20" stroke-width="2" fill="none"/><rect x="30" y="27" width="12" height="10" rx="1.5" fill="#f0cc30"/></svg>
<div class="t" style="left:114.5px;top:691.05px;font-size:21.2px;color:#111;">Control Coverage</div>
<svg class="a" style="left:50px;top:768px;" width="52" height="50" viewBox="0 0 52 50"><defs><linearGradient id="silv" x1="0" y1="0" x2="0" y2="1"><stop offset="0" stop-color="#fafafa"/><stop offset="0.5" stop-color="#b0b0b0"/><stop offset="1" stop-color="#e8e8e8"/></linearGradient><linearGradient id="silv2" x1="0" y1="0" x2="1" y2="0"><stop offset="0" stop-color="#9a9a9a"/><stop offset="0.5" stop-color="#f4f4f4"/><stop offset="1" stop-color="#a0a0a0"/></linearGradient><linearGradient id="tfr" x1="0" y1="0" x2="0" y2="1"><stop offset="0" stop-color="#4a4a4a"/><stop offset="0.12" stop-color="#9a9a9a"/><stop offset="1" stop-color="#7a7a7a"/></linearGradient></defs><rect x="0" y="0" width="44" height="44" fill="#555"/><rect x="1.0" y="1.0" width="7.8" height="7.8" fill="#f59a0a"/><rect x="9.6" y="1.0" width="7.8" height="7.8" fill="#f59a0a"/><rect x="18.2" y="1.0" width="7.8" height="7.8" fill="#f01010"/><rect x="26.8" y="1.0" width="7.8" height="7.8" fill="#f01010"/><rect x="35.4" y="1.0" width="7.8" height="7.8" fill="#f01010"/><rect x="1.0" y="9.6" width="7.8" height="7.8" fill="#f5e010"/><rect x="9.6" y="9.6" width="7.8" height="7.8" fill="#f59a0a"/><rect x="18.2" y="9.6" width="7.8" height="7.8" fill="#f59a0a"/><rect x="26.8" y="9.6" width="7.8" height="7.8" fill="#f59a0a"/><rect x="35.4" y="9.6" width="7.8" height="7.8" fill="#f01010"/><rect x="1.0" y="18.2" width="7.8" height="7.8" fill="#30c010"/><rect x="9.6" y="18.2" width="7.8" height="7.8" fill="#f5e010"/><rect x="18.2" y="18.2" width="7.8" height="7.8" fill="#f5e010"/><rect x="26.8" y="18.2" width="7.8" height="7.8" fill="#f5e010"/><rect x="35.4" y="18.2" width="7.8" height="7.8" fill="#f59a0a"/><rect x="1.0" y="26.8" width="7.8" height="7.8" fill="#30c010"/><rect x="9.6" y="26.8" width="7.8" height="7.8" fill="#30c010"/><rect x="18.2" y="26.8" width="7.8" height="7.8" fill="#30c010"/><rect x="26.8" y="26.8" width="7.8" height="7.8" fill="#f5e010"/><rect x="35.4" y="26.8" width="7.8" height="7.8" fill="#f5e010"/><rect x="1.0" y="35.4" width="7.8" height="7.8" fill="#f8f8f8"/><rect x="9.6" y="35.4" width="7.8" height="7.8" fill="#f8f8f8"/><rect x="18.2" y="35.4" width="7.8" height="7.8" fill="#f8f8f8"/><rect x="26.8" y="35.4" width="7.8" height="7.8" fill="#f8f8f8"/><rect x="35.4" y="35.4" width="7.8" height="7.8" fill="#f8f8f8"/><circle cx="37" cy="35.5" r="14" fill="#6a6a6a"/><circle cx="37" cy="35.5" r="12.8" fill="url(#silv)"/><circle cx="37" cy="35.5" r="11.4" fill="#5e5e5e"/><circle cx="37" cy="35.5" r="10.4" fill="url(#silv2)"/><g transform="translate(1,6.5)"><path d="M30 22 H42 L41 37 H31 Z" fill="#f04a1e"/><rect x="30" y="22" width="12" height="3" fill="#f7a050"/><circle cx="36" cy="29" r="3.6" fill="#f5d020"/><circle cx="36" cy="29" r="1.3" fill="#222"/></g></svg>
<div class="t" style="left:114.5px;top:783.05px;font-size:21.2px;color:#111;">Risk Matrix</div>
<svg class="a" style="left:50px;top:860px;" width="52" height="50" viewBox="0 0 52 50"><defs><linearGradient id="silv" x1="0" y1="0" x2="0" y2="1"><stop offset="0" stop-color="#fafafa"/><stop offset="0.5" stop-color="#b0b0b0"/><stop offset="1" stop-color="#e8e8e8"/></linearGradient><linearGradient id="silv2" x1="0" y1="0" x2="1" y2="0"><stop offset="0" stop-color="#9a9a9a"/><stop offset="0.5" stop-color="#f4f4f4"/><stop offset="1" stop-color="#a0a0a0"/></linearGradient><linearGradient id="tfr" x1="0" y1="0" x2="0" y2="1"><stop offset="0" stop-color="#4a4a4a"/><stop offset="0.12" stop-color="#9a9a9a"/><stop offset="1" stop-color="#7a7a7a"/></linearGradient></defs><rect x="0" y="0" width="44" height="44" fill="#555"/><rect x="1.0" y="1.0" width="7.8" height="7.8" fill="#f59a0a"/><rect x="9.6" y="1.0" width="7.8" height="7.8" fill="#f59a0a"/><rect x="18.2" y="1.0" width="7.8" height="7.8" fill="#f01010"/><rect x="26.8" y="1.0" width="7.8" height="7.8" fill="#f01010"/><rect x="35.4" y="1.0" width="7.8" height="7.8" fill="#f01010"/><rect x="1.0" y="9.6" width="7.8" height="7.8" fill="#f5e010"/><rect x="9.6" y="9.6" width="7.8" height="7.8" fill="#f59a0a"/><rect x="18.2" y="9.6" width="7.8" height="7.8" fill="#f59a0a"/><rect x="26.8" y="9.6" width="7.8" height="7.8" fill="#f59a0a"/><rect x="35.4" y="9.6" width="7.8" height="7.8" fill="#f01010"/><rect x="1.0" y="18.2" width="7.8" height="7.8" fill="#30c010"/><rect x="9.6" y="18.2" width="7.8" height="7.8" fill="#f5e010"/><rect x="18.2" y="18.2" width="7.8" height="7.8" fill="#f5e010"/><rect x="26.8" y="18.2" width="7.8" height="7.8" fill="#f5e010"/><rect x="35.4" y="18.2" width="7.8" height="7.8" fill="#f59a0a"/><rect x="1.0" y="26.8" width="7.8" height="7.8" fill="#30c010"/><rect x="9.6" y="26.8" width="7.8" height="7.8" fill="#30c010"/><rect x="18.2" y="26.8" width="7.8" height="7.8" fill="#30c010"/><rect x="26.8" y="26.8" width="7.8" height="7.8" fill="#f5e010"/><rect x="35.4" y="26.8" width="7.8" height="7.8" fill="#f5e010"/><rect x="1.0" y="35.4" width="7.8" height="7.8" fill="#f8f8f8"/><rect x="9.6" y="35.4" width="7.8" height="7.8" fill="#f8f8f8"/><rect x="18.2" y="35.4" width="7.8" height="7.8" fill="#f8f8f8"/><rect x="26.8" y="35.4" width="7.8" height="7.8" fill="#f8f8f8"/><rect x="35.4" y="35.4" width="7.8" height="7.8" fill="#f8f8f8"/><circle cx="37" cy="35.5" r="14" fill="#6a6a6a"/><circle cx="37" cy="35.5" r="12.8" fill="url(#silv)"/><circle cx="37" cy="35.5" r="11.4" fill="#5e5e5e"/><circle cx="37" cy="35.5" r="10.4" fill="url(#silv2)"/><g transform="translate(1,6.5)"><path d="M32 27 V24 A4 4 0 0 1 40 24 V27" stroke="#b89a20" stroke-width="2" fill="none"/><rect x="30" y="27" width="12" height="10" rx="1.5" fill="#f0cc30"/></g></svg>
<div class="t" style="left:114.5px;top:875.05px;font-size:21.2px;color:#111;">Control Matrix</div>
<svg class="a" style="left:51px;top:959px;" width="50" height="46" viewBox="0 0 50 46"><defs><linearGradient id="silv" x1="0" y1="0" x2="0" y2="1"><stop offset="0" stop-color="#fafafa"/><stop offset="0.5" stop-color="#b0b0b0"/><stop offset="1" stop-color="#e8e8e8"/></linearGradient><linearGradient id="silv2" x1="0" y1="0" x2="1" y2="0"><stop offset="0" stop-color="#9a9a9a"/><stop offset="0.5" stop-color="#f4f4f4"/><stop offset="1" stop-color="#a0a0a0"/></linearGradient><linearGradient id="tfr" x1="0" y1="0" x2="0" y2="1"><stop offset="0" stop-color="#4a4a4a"/><stop offset="0.12" stop-color="#9a9a9a"/><stop offset="1" stop-color="#7a7a7a"/></linearGradient></defs><rect x="0" y="1" width="48" height="41" rx="3" fill="url(#tfr)"/><rect x="2" y="5" width="44" height="34" fill="#8a8a7a"/><rect x="2.6" y="5.5" width="8.2" height="6.0" fill="#efe98a"/><rect x="11.4" y="5.5" width="8.2" height="6.0" fill="#f1e48c"/><rect x="20.2" y="5.5" width="8.2" height="6.0" fill="#f2d88a"/><rect x="29.0" y="5.5" width="8.2" height="6.0" fill="#f3c888"/><rect x="37.8" y="5.5" width="8.2" height="6.0" fill="#f4a868"/><rect x="2.6" y="12.2" width="8.2" height="6.0" fill="#efe98a"/><rect x="11.4" y="12.2" width="8.2" height="6.0" fill="#b9b9b9"/><rect x="20.2" y="12.2" width="8.2" height="6.0" fill="#b9b9b9"/><rect x="29.0" y="12.2" width="8.2" height="6.0" fill="#b9b9b9"/><rect x="37.8" y="12.2" width="8.2" height="6.0" fill="#b9b9b9"/><rect x="2.6" y="18.9" width="8.2" height="6.0" fill="#efe98a"/><rect x="11.4" y="18.9" width="8.2" height="6.0" fill="#d77a7a"/><rect x="20.2" y="18.9" width="8.2" height="6.0" fill="#9ccf6a"/><rect x="29.0" y="18.9" width="8.2" height="6.0" fill="#b9b9b9"/><rect x="37.8" y="18.9" width="8.2" height="6.0" fill="#b9b9b9"/><rect x="2.6" y="25.6" width="8.2" height="6.0" fill="#efe98a"/><rect x="11.4" y="25.6" width="8.2" height="6.0" fill="#b9b9b9"/><rect x="20.2" y="25.6" width="8.2" height="6.0" fill="#b9b9b9"/><rect x="29.0" y="25.6" width="8.2" height="6.0" fill="#b9b9b9"/><rect x="37.8" y="25.6" width="8.2" height="6.0" fill="#b9b9b9"/><rect x="2.6" y="32.3" width="8.2" height="6.0" fill="#efe98a"/><rect x="11.4" y="32.3" width="8.2" height="6.0" fill="#86cc3c"/><rect x="20.2" y="32.3" width="8.2" height="6.0" fill="#d06a6a"/><rect x="29.0" y="32.3" width="8.2" height="6.0" fill="#b9b9b9"/><rect x="37.8" y="32.3" width="8.2" height="6.0" fill="#b9b9b9"/><circle cx="36" cy="29.5" r="14" fill="#6a6a6a"/><circle cx="36" cy="29.5" r="12.8" fill="url(#silv)"/><circle cx="36" cy="29.5" r="11.4" fill="#5e5e5e"/><circle cx="36" cy="29.5" r="10.4" fill="url(#silv2)"/><path d="M36 21 L44 35 H28 Z" fill="#fff" stroke="#a08040" stroke-width="1.2"/><rect x="35.2" y="26" width="1.6" height="5" fill="#a06020"/></svg>
<div class="t" style="left:114.5px;top:967.05px;font-size:21.2px;color:#111;">Incident Tracker</div>
<svg class="a" style="left:51px;top:1051px;" width="50" height="46" viewBox="0 0 50 46"><defs><linearGradient id="silv" x1="0" y1="0" x2="0" y2="1"><stop offset="0" stop-color="#fafafa"/><stop offset="0.5" stop-color="#b0b0b0"/><stop offset="1" stop-color="#e8e8e8"/></linearGradient><linearGradient id="silv2" x1="0" y1="0" x2="1" y2="0"><stop offset="0" stop-color="#9a9a9a"/><stop offset="0.5" stop-color="#f4f4f4"/><stop offset="1" stop-color="#a0a0a0"/></linearGradient><linearGradient id="tfr" x1="0" y1="0" x2="0" y2="1"><stop offset="0" stop-color="#4a4a4a"/><stop offset="0.12" stop-color="#9a9a9a"/><stop offset="1" stop-color="#7a7a7a"/></linearGradient></defs><rect x="0" y="1" width="48" height="41" rx="3" fill="url(#tfr)"/><rect x="2" y="5" width="44" height="34" fill="#8a8a7a"/><rect x="2.6" y="5.5" width="8.2" height="6.0" fill="#efe98a"/><rect x="11.4" y="5.5" width="8.2" height="6.0" fill="#f1e48c"/><rect x="20.2" y="5.5" width="8.2" height="6.0" fill="#f2d88a"/><rect x="29.0" y="5.5" width="8.2" height="6.0" fill="#f3c888"/><rect x="37.8" y="5.5" width="8.2" height="6.0" fill="#f4a868"/><rect x="2.6" y="12.2" width="8.2" height="6.0" fill="#efe98a"/><rect x="11.4" y="12.2" width="8.2" height="6.0" fill="#b9b9b9"/><rect x="20.2" y="12.2" width="8.2" height="6.0" fill="#b9b9b9"/><rect x="29.0" y="12.2" width="8.2" height="6.0" fill="#b9b9b9"/><rect x="37.8" y="12.2" width="8.2" height="6.0" fill="#b9b9b9"/><rect x="2.6" y="18.9" width="8.2" height="6.0" fill="#efe98a"/><rect x="11.4" y="18.9" width="8.2" height="6.0" fill="#d77a7a"/><rect x="20.2" y="18.9" width="8.2" height="6.0" fill="#9ccf6a"/><rect x="29.0" y="18.9" width="8.2" height="6.0" fill="#b9b9b9"/><rect x="37.8" y="18.9" width="8.2" height="6.0" fill="#b9b9b9"/><rect x="2.6" y="25.6" width="8.2" height="6.0" fill="#efe98a"/><rect x="11.4" y="25.6" width="8.2" height="6.0" fill="#b9b9b9"/><rect x="20.2" y="25.6" width="8.2" height="6.0" fill="#b9b9b9"/><rect x="29.0" y="25.6" width="8.2" height="6.0" fill="#b9b9b9"/><rect x="37.8" y="25.6" width="8.2" height="6.0" fill="#b9b9b9"/><rect x="2.6" y="32.3" width="8.2" height="6.0" fill="#efe98a"/><rect x="11.4" y="32.3" width="8.2" height="6.0" fill="#86cc3c"/><rect x="20.2" y="32.3" width="8.2" height="6.0" fill="#d06a6a"/><rect x="29.0" y="32.3" width="8.2" height="6.0" fill="#b9b9b9"/><rect x="37.8" y="32.3" width="8.2" height="6.0" fill="#b9b9b9"/><circle cx="36" cy="29.5" r="14" fill="#6a6a6a"/><circle cx="36" cy="29.5" r="12.8" fill="url(#silv)"/><circle cx="36" cy="29.5" r="11.4" fill="#5e5e5e"/><circle cx="36" cy="29.5" r="10.4" fill="url(#silv2)"/><path d="M30 36 L40 22" stroke="#2a62d0" stroke-width="4"/><circle cx="41" cy="22" r="3" fill="#f0c020"/><ellipse cx="35" cy="36" rx="5" ry="2" fill="#333"/></svg>
<div class="t" style="left:114.5px;top:1059.05px;font-size:21.2px;color:#111;">Action Tracker</div>
<svg class="a" style="left:152px;top:1121px;" width="30" height="6" viewBox="0 0 30 6"><rect x="0" y="0" width="2" height="5" fill="#a0a0a0"/><rect x="4" y="0" width="2" height="5" fill="#a0a0a0"/><rect x="8" y="0" width="2" height="5" fill="#a0a0a0"/><rect x="12" y="0" width="2" height="5" fill="#a0a0a0"/><rect x="16" y="0" width="2" height="5" fill="#a0a0a0"/><rect x="20" y="0" width="2" height="5" fill="#a0a0a0"/><rect x="24" y="0" width="2" height="5" fill="#a0a0a0"/><rect x="28" y="0" width="2" height="5" fill="#a0a0a0"/></svg>
<div class="a" style="left:81px;top:1136px;width:56px;height:56px;background:#b9c0c6;"></div>
<svg class="a" style="left:87px;top:1141px;transform:scale(1.0);transform-origin:0 0;filter:blur(0.5px)" width="44" height="44" viewBox="0 0 44 44"><defs><radialGradient id="ag" cx="0.45" cy="0.45" r="0.5"><stop offset="0" stop-color="#fffbd0"/><stop offset="0.45" stop-color="#f0e070"/><stop offset="0.75" stop-color="#40b0e8"/><stop offset="1" stop-color="#3a90e0" stop-opacity="0"/></radialGradient></defs><ellipse cx="22" cy="41" rx="11.5" ry="3.2" fill="#1e1e1e"/><g fill="none" stroke-width="2.6"><ellipse cx="22" cy="22" rx="20" ry="5.5" stroke="#2f5cc8" transform="rotate(90 22 22)"/><ellipse cx="22" cy="22" rx="21" ry="6" stroke="#3a6fd6" transform="rotate(28 22 22)"/><ellipse cx="22" cy="22" rx="21" ry="6" stroke="#2a56c0" transform="rotate(150 22 22)"/><ellipse cx="22" cy="22" rx="20" ry="4.5" stroke="#4a86e0" transform="rotate(-5 22 22)"/></g><g fill="none" stroke="#6cc0f0" stroke-width="1"><ellipse cx="22" cy="22" rx="18" ry="4" transform="rotate(90 22 22)"/><ellipse cx="22" cy="22" rx="18" ry="4" transform="rotate(28 22 22)"/><ellipse cx="22" cy="22" rx="18" ry="4" transform="rotate(150 22 22)"/></g><circle cx="21" cy="22" r="9" fill="url(#ag)"/></svg>
<svg class="a" style="left:151px;top:1142px;filter:blur(0.5px)" width="45" height="39" viewBox="0 0 45 39"><defs><linearGradient id="abr" x1="0" y1="0" x2="1" y2="0"><stop offset="0" stop-color="#f5a070"/><stop offset="0.5" stop-color="#ffe840"/><stop offset="1" stop-color="#f06a10"/></linearGradient>
<linearGradient id="abp" x1="0" y1="0" x2="1" y2="0"><stop offset="0" stop-color="#f09040"/><stop offset="0.5" stop-color="#ffd0a0"/><stop offset="1" stop-color="#f08030"/></linearGradient></defs>
<rect x="4" y="10" width="36" height="23" fill="#3d7ad8"/>
<g fill="#d0e8ff"><rect x="6.0" y="10" width="2" height="23"/><rect x="12.2" y="10" width="2" height="23"/><rect x="18.4" y="10" width="2" height="23"/><rect x="24.6" y="10" width="2" height="23"/><rect x="30.8" y="10" width="2" height="23"/><rect x="37.0" y="10" width="2" height="23"/></g>
<path d="M4 23 Q12 21 20 25 T40 23 V27 Q30 29 20 28.5 T4 27 Z" fill="#f0b030"/>
<rect x="4" y="27.5" width="36" height="5" fill="#2a8ae0"/>
<rect x="2" y="4" width="40" height="6.5" fill="url(#abr)"/>
<rect x="2" y="33" width="40" height="4.5" fill="#2e1c08"/><rect x="2" y="32" width="40" height="1.5" fill="#e08020"/>
<rect x="0" y="1" width="5" height="37" rx="2.5" fill="url(#abp)"/><rect x="39" y="1" width="5" height="37" rx="2.5" fill="url(#abp)"/></svg>
<svg class="a" style="left:219px;top:1139px;filter:blur(0.5px)" width="37" height="49" viewBox="0 0 37 49"><defs><radialGradient id="ug1" cx="0.5" cy="0.75" r="0.6"><stop offset="0" stop-color="#5ac8f0"/><stop offset="0.6" stop-color="#2050c8"/><stop offset="1" stop-color="#0a2a90"/></radialGradient>
<radialGradient id="ug2" cx="0.5" cy="0.8" r="0.7"><stop offset="0" stop-color="#40c0f0"/><stop offset="0.45" stop-color="#a8c8f0"/><stop offset="0.8" stop-color="#3060c0"/><stop offset="1" stop-color="#0a2a90"/></radialGradient></defs>
<ellipse cx="17.5" cy="36.5" rx="17.5" ry="11.7" fill="url(#ug2)"/>
<circle cx="18" cy="14.5" r="13.7" fill="url(#ug1)"/>
<path d="M4.3 14 Q4 4 18 0.8 Q32 4 31.7 14 Q28 8 18 8.5 Q8 8 4.3 14 Z" fill="#0a0a0a"/>
<path d="M14.5 29.5 H21 L22 40 L18 44 L14 40 Z" fill="#f0c020"/></svg>
<svg class="a" style="left:293px;top:1160px;" width="16" height="8" viewBox="0 0 16 8"><path d="M0 0 H16 L8.0 8 Z" fill="#555"/></svg>
<div class="a" style="left:345px;top:364px;width:1647px;height:826px;background:#e6e9ec;"></div>
<div class="a" style="left:355px;top:320px;width:120px;height:8px;background:#5b77d2;"></div>
<div class="a" style="left:355px;top:328px;width:120px;height:36px;background:#f2f3f5;"></div>
<div class="t" style="left:366.5px;top:330.73px;font-size:23px;color:#1e1e1e;letter-spacing:0.8px">Home</div>
<svg class="a" style="left:453px;top:335px;" width="15" height="15" viewBox="0 0 15 15"><path d="M1.5 1.5 L13.5 13.5 M13.5 1.5 L1.5 13.5" stroke="#555" stroke-width="2.6"/></svg>
<div class="a" style="left:483px;top:316px;width:139px;height:8px;background:#5b77d2;"></div>
<div class="a" style="left:483px;top:324px;width:139px;height:40px;background:#e6e9ec;"></div>
<div class="t" style="left:494px;top:330.73px;font-size:23px;color:#1e1e1e;">Analysis</div>
<svg class="a" style="left:600px;top:335px;" width="15" height="15" viewBox="0 0 15 15"><path d="M1.5 1.5 L13.5 13.5 M13.5 1.5 L1.5 13.5" stroke="#555" stroke-width="2.6"/></svg>
<svg class="a" style="left:1926px;top:338px;" width="18" height="10" viewBox="0 0 18 10"><path d="M0 0 H18 L9.0 10 Z" fill="#666"/></svg>
<svg class="a" style="left:1965px;top:335px;" width="15" height="15" viewBox="0 0 15 15"><path d="M1.5 1.5 L13.5 13.5 M13.5 1.5 L1.5 13.5" stroke="#666" stroke-width="2.6"/></svg>
<svg class="a" style="left:371px;top:396px;" width="10" height="14" viewBox="0 0 10 14"><path d="M2 1.5 L8 7 L2 12.5" stroke="#333" stroke-width="2" fill="none"/></svg>
<svg class="a" style="left:371px;top:803px;" width="10" height="14" viewBox="0 0 10 14"><path d="M2 1.5 L8 7 L2 12.5" stroke="#333" stroke-width="2" fill="none"/></svg>
<div class="t" style="left:374px;top:519px;font-size:27.6px;color:#111;transform:translate(-50%,-50%) rotate(-90deg);">All Org Units</div>
<div class="t" style="left:374px;top:952px;font-size:27px;color:#111;transform:translate(-50%,-50%) rotate(-90deg);">All Process Areas</div>
<svg class="a" style="left:1956px;top:396px;" width="10" height="15" viewBox="0 0 10 15"><path d="M8 1.5 L2 7.5 L8 13.5" stroke="#333" stroke-width="2" fill="none"/></svg>
<div class="t" style="left:1963px;top:503px;font-size:27px;color:#111;transform:translate(-50%,-50%) rotate(90deg);">Properties</div>
<div class="a" style="left:407px;top:374px;width:1517px;height:20px;background:#37464d;"></div>
<svg class="a" style="left:1157px;top:379px;" width="18" height="10" viewBox="0 0 18 10"><path d="M2 1.5 L9 8 L16 1.5" stroke="#8c979c" stroke-width="3" fill="none"/></svg>
<div class="a" style="left:407px;top:394px;width:1517px;height:660px;background:#fff;border:2px solid #ababab"></div>
<svg class="a" style="left:0px;top:0px;" width="2000" height="1250" viewBox="0 0 2000 1250"><rect x="525" y="449" width="1363" height="102" fill="#dcdcdc"/><rect x="525" y="551" width="1363" height="138" fill="#e2e2e2"/><rect x="525" y="689" width="1363" height="138" fill="#dcdcdc"/><rect x="525" y="827" width="1363" height="138" fill="#e2e2e2"/><rect x="525" y="826.0" width="1363" height="2" fill="#b4b4b4"/><rect x="525" y="688.0" width="1363" height="2" fill="#b4b4b4"/><rect x="525" y="550.0" width="1363" height="2" fill="#b4b4b4"/><polygon points="693,964 693,584.5 1035.5,496.8 1377,733.8 1716.5,828.7 1716.5,964" fill="#9acd32" fill-opacity="0.5"/><polyline points="694,584.5 1035.5,496.8 1377,733.8 1718,828.7" fill="none" stroke="#9acd32" stroke-width="2.6" stroke-linejoin="miter"/><rect x="523" y="449" width="2" height="517" fill="#a8a8a8"/><rect x="513" y="964" width="1375" height="2" fill="#a8a8a8"/><rect x="513" y="964.0" width="10" height="2" fill="#a8a8a8"/><rect x="519" y="936.4" width="4" height="2" fill="#a8a8a8"/><rect x="519" y="908.8" width="4" height="2" fill="#a8a8a8"/><rect x="519" y="881.2" width="4" height="2" fill="#a8a8a8"/><rect x="519" y="853.6" width="4" height="2" fill="#a8a8a8"/><rect x="513" y="826.0" width="10" height="2" fill="#a8a8a8"/><rect x="519" y="798.4" width="4" height="2" fill="#a8a8a8"/><rect x="519" y="770.8" width="4" height="2" fill="#a8a8a8"/><rect x="519" y="743.2" width="4" height="2" fill="#a8a8a8"/><rect x="519" y="715.6" width="4" height="2" fill="#a8a8a8"/><rect x="513" y="688.0" width="10" height="2" fill="#a8a8a8"/><rect x="519" y="660.4" width="4" height="2" fill="#a8a8a8"/><rect x="519" y="632.8" width="4" height="2" fill="#a8a8a8"/><rect x="519" y="605.2" width="4" height="2" fill="#a8a8a8"/><rect x="519" y="577.6" width="4" height="2" fill="#a8a8a8"/><rect x="513" y="550.0" width="10" height="2" fill="#a8a8a8"/><rect x="519" y="522.4" width="4" height="2" fill="#a8a8a8"/><rect x="519" y="494.8" width="4" height="2" fill="#a8a8a8"/><rect x="519" y="467.2" width="4" height="2" fill="#a8a8a8"/><rect x="693" y="966" width="2" height="20" fill="#a8a8a8"/><rect x="1034.5" y="966" width="2" height="20" fill="#a8a8a8"/><rect x="1376" y="966" width="2" height="20" fill="#a8a8a8"/><rect x="1717" y="966" width="2" height="20" fill="#a8a8a8"/><rect x="523" y="448" width="1365" height="2" fill="#b4b4b4"/><rect x="1887" y="448" width="2" height="518" fill="#b4b4b4"/><rect x="442" y="449" width="1446" height="570" fill="none" stroke="#000" stroke-width="2" stroke-dasharray="2 4"/></svg>
<div class="t" style="left:402px;top:953.03px;font-size:23px;color:#222;text-align:right;width:100px;">0</div>
<div class="t" style="left:402px;top:815.03px;font-size:23px;color:#222;text-align:right;width:100px;">1000</div>
<div class="t" style="left:402px;top:677.03px;font-size:23px;color:#222;text-align:right;width:100px;">2000</div>
<div class="t" style="left:402px;top:539.03px;font-size:23px;color:#222;text-align:right;width:100px;">3000</div>
<div class="t" style="left:644px;top:990.53px;font-size:23px;color:#222;text-align:center;width:100px;">2015</div>
<div class="t" style="left:985.5px;top:990.53px;font-size:23px;color:#222;text-align:center;width:100px;">2016</div>
<div class="t" style="left:1327px;top:990.53px;font-size:23px;color:#222;text-align:center;width:100px;">2017</div>
<div class="t" style="left:1668px;top:990.53px;font-size:23px;color:#222;text-align:center;width:100px;">2018</div>
<div class="a" style="left:647px;top:538px;width:93px;height:45px;background:#9acd32;border-radius:4px"></div>
<div class="t" style="left:647px;top:542.73px;font-size:33.4px;color:#222;text-align:center;width:93px;-webkit-text-stroke:0.5px #9acd32">2772</div>
<div class="a" style="left:989px;top:450px;width:93px;height:45px;background:#64a838;border-radius:4px"></div>
<div class="t" style="left:989px;top:454.73px;font-size:33.4px;color:#222;text-align:center;width:93px;-webkit-text-stroke:0.5px #64a838">3407</div>
<div class="a" style="left:1329px;top:688px;width:93px;height:45px;background:#3aa86f;border-radius:4px"></div>
<div class="t" style="left:1329px;top:692.73px;font-size:33.4px;color:#222;text-align:center;width:93px;-webkit-text-stroke:0.5px #3aa86f">1690</div>
<div class="a" style="left:1671px;top:782px;width:93px;height:45px;background:#45c3a3;border-radius:4px"></div>
<div class="t" style="left:1671px;top:786.73px;font-size:33.4px;color:#222;text-align:center;width:93px;-webkit-text-stroke:0.5px #45c3a3">1002</div>
<div class="a" style="left:407px;top:1062px;width:1517px;height:20px;background:#37464d;"></div>
<svg class="a" style="left:1157px;top:1067px;" width="18" height="10" viewBox="0 0 18 10"><path d="M2 1.5 L9 8 L16 1.5" stroke="#8c979c" stroke-width="3" fill="none"/></svg>
<div class="a" style="left:407px;top:1082px;width:1517px;height:62px;background:#4a5a62;"></div>
<div class="a" style="left:407px;top:1144px;width:1517px;height:2px;background:#b0b0b0;"></div>
<div class="a" style="left:407px;top:1146px;width:1517px;height:34px;background:#fff;"></div>
<div class="a" style="left:411px;top:1090px;width:492px;height:48px;background:#4a5a62;border:2px solid #c9d0d4"></div>
<div class="t" style="left:425px;top:1101.18px;font-size:24.6px;color:#fff;">Audit</div>
<svg class="a" style="left:861px;top:1103px;" width="24" height="22" viewBox="0 0 24 22"><path d="M1 2 H19 L12 9 V17 H8 V9 Z" fill="#7d878c" opacity="0.9"/><path d="M13 11 L19 16 L13 21 Z" fill="#3d474c"/></svg>
<div class="a" style="left:911px;top:1090px;width:233px;height:48px;background:#4a5a62;border:2px solid #c9d0d4"></div>
<div class="t" style="left:925px;top:1101.18px;font-size:24.6px;color:#fff;">Manager</div>
<svg class="a" style="left:1102px;top:1103px;" width="24" height="22" viewBox="0 0 24 22"><path d="M1 2 H19 L12 9 V17 H8 V9 Z" fill="#7d878c" opacity="0.9"/><path d="M13 11 L19 16 L13 21 Z" fill="#3d474c"/></svg>
<div class="a" style="left:1152px;top:1090px;width:255px;height:48px;background:#4a5a62;border:2px solid #c9d0d4"></div>
<div class="t" style="left:1166px;top:1101.18px;font-size:24.6px;color:#fff;">Lead Auditor</div>
<svg class="a" style="left:1365px;top:1103px;" width="24" height="22" viewBox="0 0 24 22"><path d="M1 2 H19 L12 9 V17 H8 V9 Z" fill="#7d878c" opacity="0.9"/><path d="M13 11 L19 16 L13 21 Z" fill="#3d474c"/></svg>
<div class="a" style="left:1415px;top:1090px;width:258px;height:48px;background:#4a5a62;border:2px solid #c9d0d4"></div>
<div class="t" style="left:1429px;top:1101.18px;font-size:24.6px;color:#fff;">Type</div>
<svg class="a" style="left:1631px;top:1103px;" width="24" height="22" viewBox="0 0 24 22"><path d="M1 2 H19 L12 9 V17 H8 V9 Z" fill="#7d878c" opacity="0.9"/><path d="M13 11 L19 16 L13 21 Z" fill="#3d474c"/></svg>
<svg class="a" style="left:837px;top:1110px;" width="14" height="8" viewBox="0 0 14 8"><path d="M0 7.5 L7 0 L14 7.5 Z" fill="#e3e3e3"/></svg>
<div class="a" style="left:2px;top:1196px;width:1996px;height:2px;background:#8c9ba5;"></div>
<div class="a" style="left:2px;top:1198px;width:1996px;height:52px;background:#f2f3f5;"></div>
<div class="t" style="left:1621px;top:1210.13px;font-size:23px;color:#111;">100%</div>
<div class="a" style="left:1684px;top:1202px;width:2px;height:40px;background:#dcdcdc;"></div>
<div class="a" style="left:1691px;top:1216px;width:240px;height:4px;background:#333;"></div>
<div class="a" style="left:1769px;top:1209px;width:8px;height:18px;background:#333;outline:1px solid #e0e0e0"></div>
<div class="a" style="left:1695px;top:1228px;width:2px;height:8px;background:#333;"></div>
<div class="a" style="left:1772px;top:1228px;width:2px;height:8px;background:#333;"></div>
<div class="a" style="left:1848px;top:1228px;width:2px;height:8px;background:#333;"></div>
<div class="a" style="left:1925px;top:1228px;width:2px;height:8px;background:#333;"></div>
<svg class="a" style="left:1980px;top:1230px;" width="16" height="16" viewBox="0 0 16 16"><rect x="12" y="0" width="3" height="3" fill="#d0d0d0"/><rect x="6" y="6" width="3" height="3" fill="#d0d0d0"/><rect x="12" y="6" width="3" height="3" fill="#d0d0d0"/><rect x="0" y="12" width="3" height="3" fill="#d0d0d0"/><rect x="6" y="12" width="3" height="3" fill="#d0d0d0"/><rect x="12" y="12" width="3" height="3" fill="#d0d0d0"/></svg>
<div class="a" style="left:0px;top:0px;width:2000px;height:2px;background:#8c9ba5;"></div>
<div class="a" style="left:0px;top:1248px;width:2000px;height:2px;background:#8c9ba5;"></div>
<div class="a" style="left:0px;top:0px;width:2px;height:1250px;background:#8c9ba5;"></div>
<div class="a" style="left:1998px;top:0px;width:2px;height:1250px;background:#8c9ba5;"></div>
</body></html>
